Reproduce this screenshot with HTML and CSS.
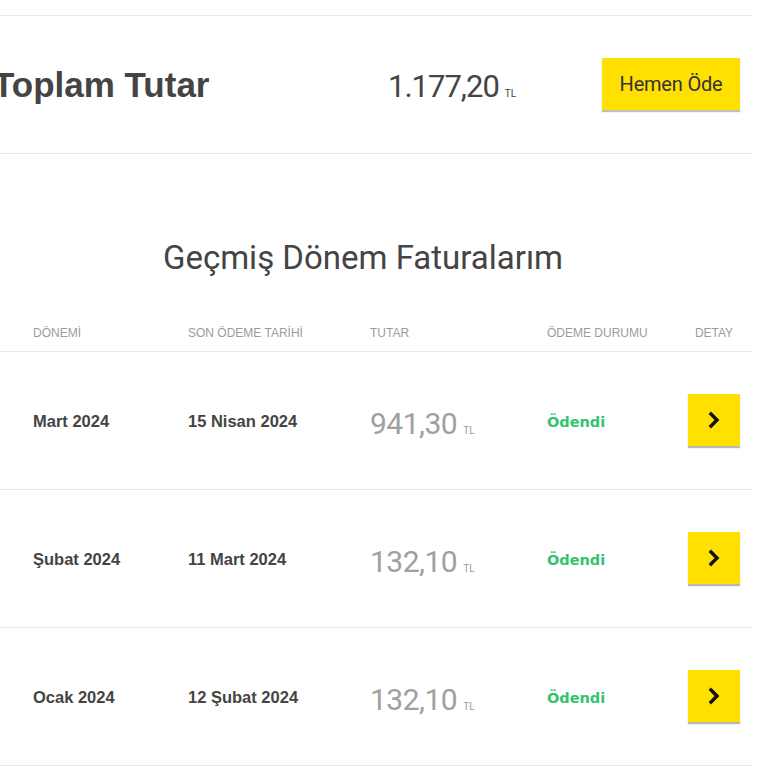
FILE: index.html
```html
<!DOCTYPE html>
<html lang="tr">
<head>
<meta charset="utf-8">
<link rel="stylesheet" href="styles.css">
</head>
<body>
<div class="page">
  <section class="summary">
    <h2 class="summary-title">Toplam Tutar</h2>
    <div class="summary-amount">1.177,20<span class="cur">TL</span></div>
    <button class="pay-btn">Hemen Öde</button>
  </section>

  <h1 class="section-title">Geçmiş Dönem Faturalarım</h1>

  <div class="table">
    <div class="row head">
      <div>DÖNEMİ</div>
      <div>SON ÖDEME TARİHİ</div>
      <div>TUTAR</div>
      <div>ÖDEME DURUMU</div>
      <div class="center">DETAY</div>
    </div>
    <div class="row item">
      <div class="cell-text">Mart 2024</div>
      <div class="cell-text">15 Nisan 2024</div>
      <div class="amount">941,30<span class="cur">TL</span></div>
      <div class="status">Ödendi</div>
      <button class="detail-btn"><svg width="12" height="18" viewBox="0 0 12 18"><polyline points="3,3 9,9 3,15" fill="none" stroke="#111" stroke-width="3.4" stroke-linecap="square" stroke-linejoin="miter"/></svg></button>
    </div>
    <div class="row item">
      <div class="cell-text">Şubat 2024</div>
      <div class="cell-text">11 Mart 2024</div>
      <div class="amount">132,10<span class="cur">TL</span></div>
      <div class="status">Ödendi</div>
      <button class="detail-btn"><svg width="12" height="18" viewBox="0 0 12 18"><polyline points="3,3 9,9 3,15" fill="none" stroke="#111" stroke-width="3.4" stroke-linecap="square" stroke-linejoin="miter"/></svg></button>
    </div>
    <div class="row item">
      <div class="cell-text">Ocak 2024</div>
      <div class="cell-text">12 Şubat 2024</div>
      <div class="amount">132,10<span class="cur">TL</span></div>
      <div class="status">Ödendi</div>
      <button class="detail-btn"><svg width="12" height="18" viewBox="0 0 12 18"><polyline points="3,3 9,9 3,15" fill="none" stroke="#111" stroke-width="3.4" stroke-linecap="square" stroke-linejoin="miter"/></svg></button>
    </div>
  </div>
</div>
</body>
</html>
```

FILE: styles.css
```css
html, body {
  margin: 0;
  padding: 0;
  background: #fff;
  overflow: hidden;
}
body {
  font-family: "Liberation Sans", Arial, sans-serif;
  color: #444;
}
.page {
  width: 752px;
  padding-top: 15px;
}
.summary {
  display: grid;
  grid-template-columns: 388px 1fr auto;
  align-items: center;
  height: 137px;
  border-top: 1px solid #e8e8e8;
  border-bottom: 1px solid #e8e8e8;
  padding-right: 12px;
}
.summary-title {
  margin: 0 0 0 -7px;
  font-size: 35px;
  font-weight: bold;
  color: #444;
}
.summary-amount {
  font-family: Roboto, sans-serif;
  font-size: 31px;
  letter-spacing: -1px;
  color: #444;
  padding-top: 4px;
}
.cur {
  font-family: Roboto, sans-serif;
  font-size: 10px;
  letter-spacing: 0;
  margin-left: 6px;
}
.pay-btn {
  width: 138px;
  height: 52px;
  border: none;
  background: #ffe000;
  box-shadow: 0 2px 1px rgba(0, 0, 0, 0.25);
  font-family: Roboto, sans-serif;
  font-size: 20px;
  letter-spacing: -0.2px;
  color: #333;
  padding: 0;
  margin-top: -2px;
}
.section-title {
  margin: 84px 0 0 0;
  padding-right: 26px;
  text-align: center;
  font-family: Roboto, sans-serif;
  font-weight: normal;
  font-size: 33px;
  color: #444;
  height: 40px;
  line-height: 40px;
}
.table {
  margin-top: 37px;
}
.row {
  display: grid;
  grid-template-columns: 155px 182px 177px 1fr 52px;
  align-items: center;
  padding-left: 33px;
  padding-right: 12px;
  border-bottom: 1px solid #e8e8e8;
}
.row.head {
  height: 36px;
  font-size: 12px;
  color: #9c9c9c;
}
.center {
  text-align: center;
}
.row.item {
  height: 135px;
  padding-top: 2px;
}
.cell-text {
  font-size: 16.5px;
  font-weight: bold;
  color: #444;
}
.amount {
  font-family: Roboto, sans-serif;
  font-size: 30px;
  color: #a0a0a0;
  letter-spacing: -0.5px;
  padding-top: 4px;
}
.amount .cur {
  color: #999;
}
.status {
  font-family: "DejaVu Sans", Verdana, sans-serif;
  font-weight: bold;
  font-size: 14.5px;
  color: #33c46c;
}
.detail-btn {
  width: 52px;
  height: 52px;
  border: none;
  padding: 0;
  margin-top: -4px;
  background: #ffe000;
  box-shadow: 0 2px 1px rgba(0, 0, 0, 0.28);
  display: flex;
  align-items: center;
  justify-content: center;
}
```
